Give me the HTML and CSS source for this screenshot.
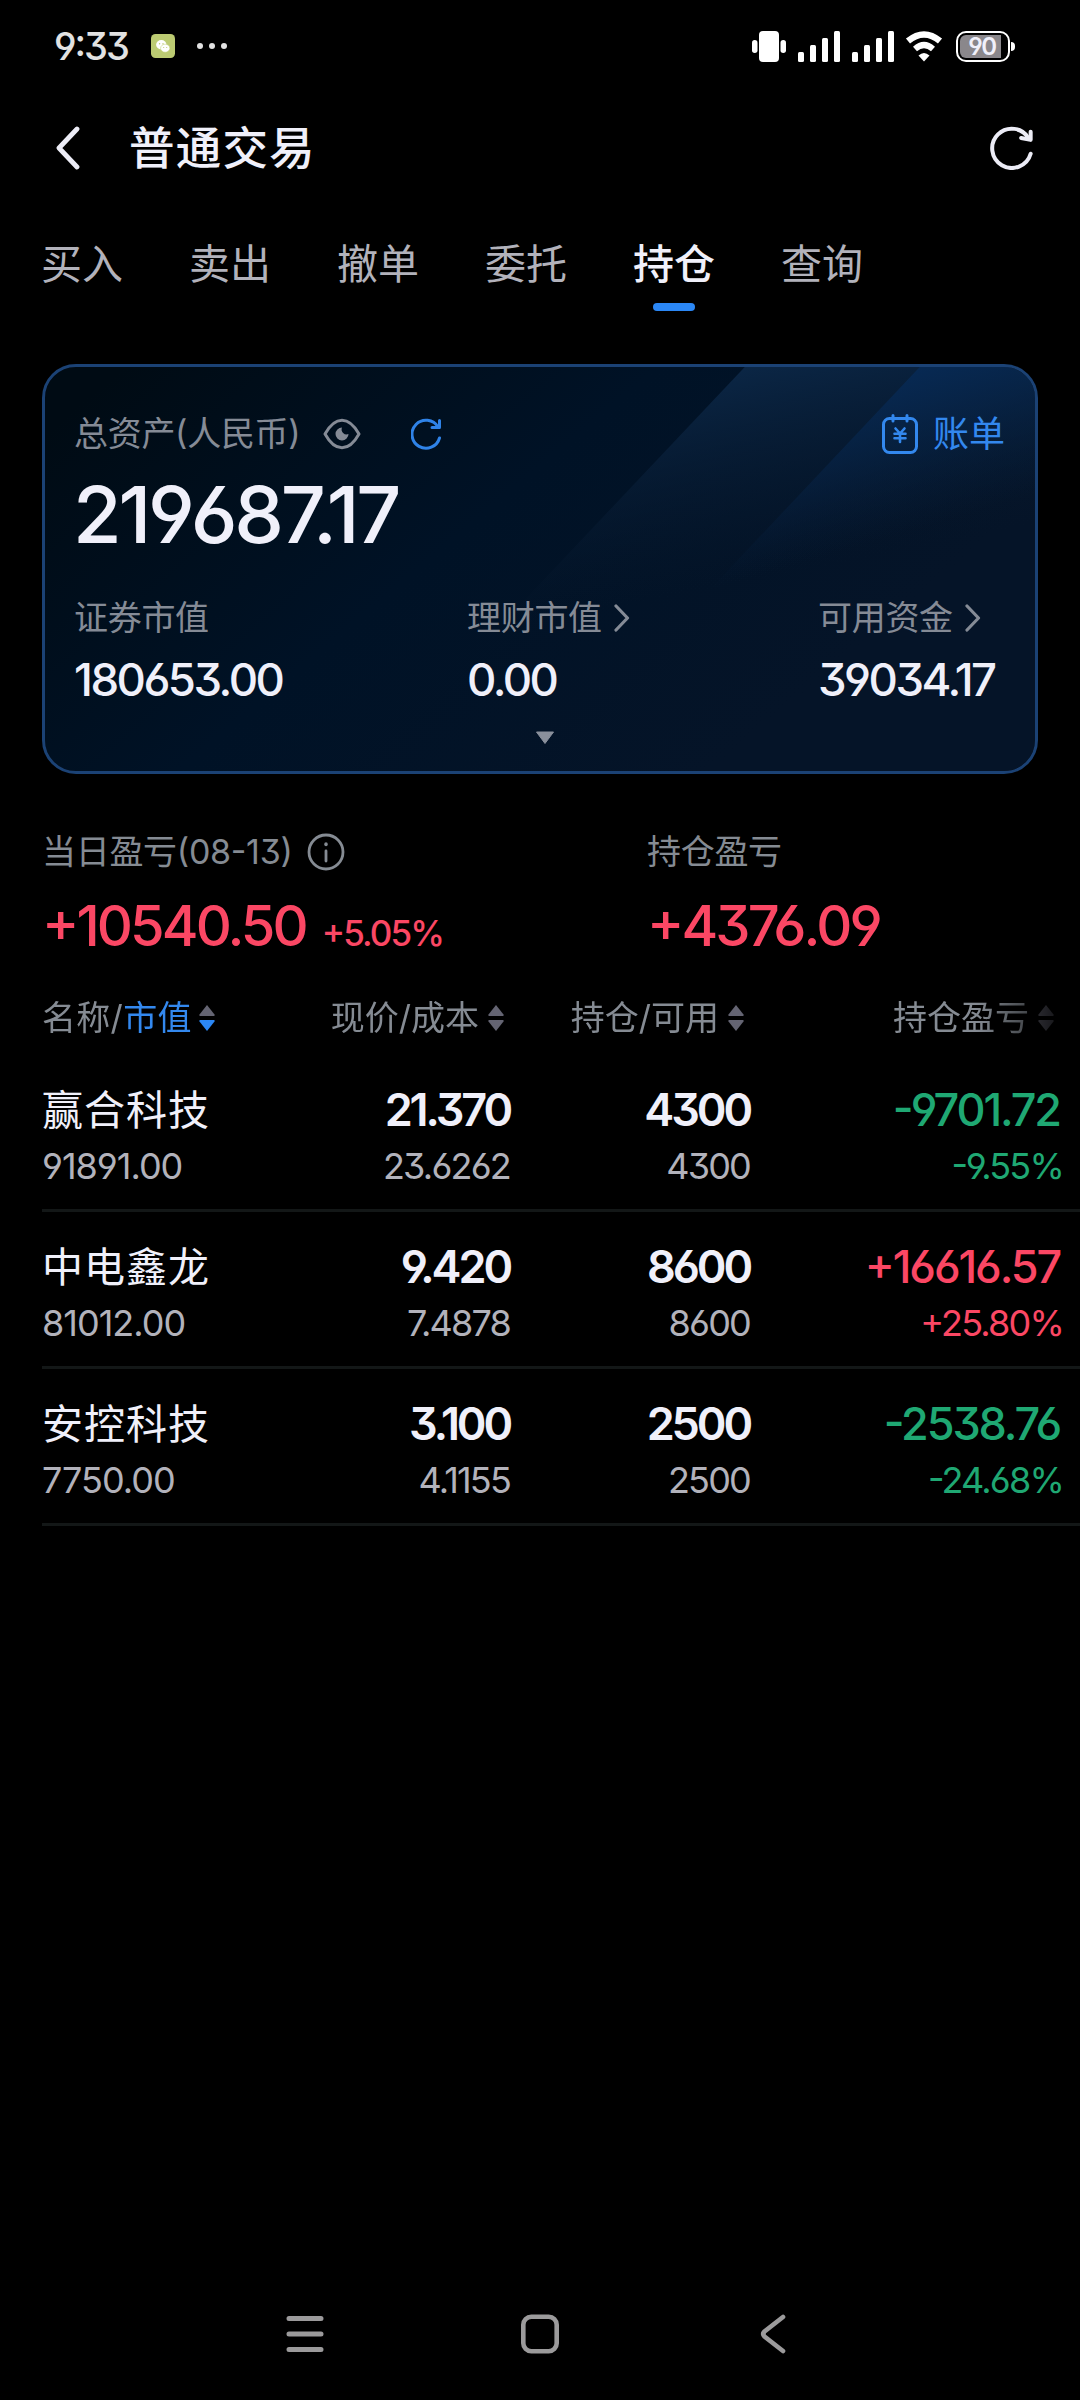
FILE: index.html
```html
<!DOCTYPE html>
<html lang="zh-CN">
<head>
  <meta charset="UTF-8">
  <meta name="viewport" content="width=device-width, initial-scale=1.0">
  <title>普通交易</title>
  <link rel="stylesheet" href="styles.css">
</head>
<body>
  <div class="status-bar">
    <span class="time">9:33</span>
    <svg class="chat-icon" width="24" height="24" viewBox="0 0 24 24">
      <rect width="24" height="24" rx="4.5" fill="#bccb72"/>
      <ellipse cx="10.3" cy="10.8" rx="5.2" ry="4.7" fill="#fff"/>
      <ellipse cx="14.2" cy="14.2" rx="4.6" ry="4" fill="#fff" stroke="#bccb72" stroke-width=".5"/>
      <g fill="#bccb72">
        <circle cx="8.6" cy="9.8" r=".7"/><circle cx="12" cy="9.8" r=".7"/>
        <circle cx="12.7" cy="13.5" r=".6"/><circle cx="15.7" cy="13.5" r=".6"/>
      </g>
    </svg>
    <svg class="more-icon" width="30" height="8" viewBox="0 0 30 8" fill="#e2e2e2">
      <circle cx="3" cy="4" r="3"/><circle cx="15" cy="4" r="3"/><circle cx="27" cy="4" r="3"/>
    </svg>
    <div class="status-right">
      <svg width="34" height="31" viewBox="0 0 34 31" fill="#fff">
        <rect x="7" y="0" width="20" height="31" rx="4"/>
        <rect x="0" y="9" width="5.5" height="13" rx="2.7"/>
        <rect x="28.5" y="9" width="5.5" height="13" rx="2.7"/>
      </svg>
      <svg class="signal" width="42" height="31" viewBox="0 0 42 31" fill="#fff">
        <rect x="0" y="21" width="6" height="10" rx="1.5"/><rect x="12" y="14" width="6" height="17" rx="1.5"/>
        <rect x="24" y="7" width="6" height="24" rx="1.5"/><rect x="36" y="0" width="6" height="31" rx="1.5"/>
      </svg>
      <svg class="signal" width="42" height="31" viewBox="0 0 42 31" fill="#fff">
        <rect x="0" y="21" width="6" height="10" rx="1.5"/><rect x="12" y="14" width="6" height="17" rx="1.5"/>
        <rect x="24" y="7" width="6" height="24" rx="1.5"/><rect x="36" y="0" width="6" height="31" rx="1.5"/>
      </svg>
      <svg class="wifi" width="38" height="31" viewBox="0 0 38 31">
        <path d="M3 10Q19-3 35 10" fill="none" stroke="#fff" stroke-width="6.5"/>
        <path d="M10 18Q19 10 28 18" fill="none" stroke="#fff" stroke-width="6"/>
        <path d="M19 30.5L13.5 24.5Q19 19.5 24.5 24.5Z" fill="#fff"/>
      </svg>
      <div class="battery"><span class="battery-level">90</span></div>
    </div>
  </div>

  <div class="header">
    <svg width="24" height="44" viewBox="0 0 24 44" fill="none" stroke="#ececf6" stroke-width="4.8" stroke-linecap="round" stroke-linejoin="round">
      <path d="M21 3L3 22L21 41"/>
    </svg>
    <h1>普通交易</h1>
    <svg class="refresh" width="44" height="44" viewBox="0 0 46 46" fill="none" stroke="#ececf6" stroke-width="4.2" stroke-linecap="round" stroke-linejoin="round">
      <path d="M42.5 29A20.5 20.5 0 1 1 40.5 13"/>
      <path d="M42.5 6V14.5L32.5 12.5"/>
    </svg>
  </div>

  <div class="tabs">
    <div class="tab">买入</div>
    <div class="tab">卖出</div>
    <div class="tab">撤单</div>
    <div class="tab">委托</div>
    <div class="tab active">持仓</div>
    <div class="tab">查询</div>
  </div>

  <div class="card">
    <svg class="card-bg" viewBox="0 0 996 410" preserveAspectRatio="none">
      <defs>
        <linearGradient id="base" gradientUnits="userSpaceOnUse" x1="150" y1="-60" x2="600" y2="470">
          <stop offset="0" stop-color="#000b14"/>
          <stop offset=".5" stop-color="#001226"/>
          <stop offset="1" stop-color="#051428"/>
        </linearGradient>
        <linearGradient id="beam" gradientUnits="userSpaceOnUse" x1="704" y1="0" x2="746" y2="210">
          <stop offset="0" stop-color="#0b2645"/>
          <stop offset="1" stop-color="#08182c" stop-opacity="0"/>
        </linearGradient>
        <linearGradient id="beam2" gradientUnits="userSpaceOnUse" x1="880" y1="0" x2="925" y2="150">
          <stop offset="0" stop-color="#072953"/>
          <stop offset="1" stop-color="#07203f" stop-opacity="0"/>
        </linearGradient>
      </defs>
      <rect width="996" height="410" fill="url(#base)"/>
      <path d="M704 0H996V410H320Z" fill="url(#beam)"/>
      <path d="M880 0H996V230H665Z" fill="url(#beam2)"/>
    </svg>
    <div class="card-top">
      <span class="label">总资产(人民币)</span>
      <svg class="eye" width="38" height="32" viewBox="0 0 38 32">
        <path d="M2 16C7 7 12.5 2.2 19 2.2S31 7 36 16C31 25 25.5 29.8 19 29.8S7 25 2 16Z" fill="none" stroke="#858b96" stroke-width="3" stroke-linejoin="round"/>
        <path d="M19 9.5A6.5 6.5 0 1 0 25.5 16A5 5 0 0 1 19 9.5Z" fill="#858b96"/>
      </svg>
      <svg class="reload" width="30" height="32" viewBox="0 0 30 32" fill="none" stroke="#2f83e8" stroke-width="3" stroke-linecap="round" stroke-linejoin="round">
        <path d="M28.5 20A14 14 0 1 1 27 9"/>
        <path d="M28.5 2.5V9.5H21"/>
      </svg>
      <a class="bill">
        <svg width="36" height="40" viewBox="0 0 36 40" fill="none" stroke="#3388ee" stroke-width="3" stroke-linecap="round" stroke-linejoin="round">
          <rect x="1.5" y="4.5" width="33" height="34" rx="6"/>
          <path d="M11 1.5V7M25 1.5V7"/>
          <path d="M13.5 14.5L18 19.5L22.5 14.5M18 19.5V28M12.5 19.8H23.5M12.5 24.3H23.5" stroke-width="2.6"/>
        </svg>
        账单
      </a>
    </div>
    <div class="total">219687.17</div>
    <div class="assets">
      <div class="asset">
        <div class="label">证券市值</div>
        <div class="amount">180653.00</div>
      </div>
      <div class="asset">
        <div class="label">理财市值<svg class="chevron" width="16" height="28" viewBox="0 0 16 28"><path d="M2 2L13.5 14L2 26"/></svg></div>
        <div class="amount">0.00</div>
      </div>
      <div class="asset">
        <div class="label">可用资金<svg class="chevron" width="16" height="28" viewBox="0 0 16 28"><path d="M2 2L13.5 14L2 26"/></svg></div>
        <div class="amount">39034.17</div>
      </div>
    </div>
    <svg class="expand" width="20" height="14" viewBox="0 0 20 14"><path d="M1.5 1H18.5L10 12.5Z" fill="#8a909c" stroke="#8a909c" stroke-linejoin="round"/></svg>
  </div>

  <div class="profit">
    <div class="profit-item">
      <div class="label">当日盈亏(08-13)
        <svg width="38" height="38" viewBox="0 0 38 38" fill="none" stroke="#858b93" stroke-width="2.8" stroke-linecap="round">
          <circle cx="19" cy="19" r="17"/>
          <path d="M19 18V28"/>
          <path d="M19 11V11.5" stroke-width="3.5"/>
        </svg>
      </div>
      <div class="profit-value up"><span>+10540.50</span><span class="percent">+5.05%</span></div>
    </div>
    <div class="profit-item">
      <div class="label">持仓盈亏</div>
      <div class="profit-value up"><span>+4376.09</span></div>
    </div>
  </div>

  <div class="holdings">
    <div class="row head">
      <div class="cell">名称/<span class="sorted">市值</span><svg class="sort desc" width="16" height="28" viewBox="0 0 16 28"><path d="M8 1L15.5 10.5V12H.5V10.5Z"/><path class="arrow-down" d="M8 27L.5 17.5V16H15.5V17.5Z"/></svg></div>
      <div class="cell">现价/成本<svg class="sort" width="16" height="28" viewBox="0 0 16 28"><path d="M8 1L15.5 10.5V12H.5V10.5Z"/><path class="arrow-down" d="M8 27L.5 17.5V16H15.5V17.5Z"/></svg></div>
      <div class="cell">持仓/可用<svg class="sort" width="16" height="28" viewBox="0 0 16 28"><path d="M8 1L15.5 10.5V12H.5V10.5Z"/><path class="arrow-down" d="M8 27L.5 17.5V16H15.5V17.5Z"/></svg></div>
      <div class="cell">持仓盈亏<svg class="sort" width="16" height="28" viewBox="0 0 16 28"><path d="M8 1L15.5 10.5V12H.5V10.5Z"/><path class="arrow-down" d="M8 27L.5 17.5V16H15.5V17.5Z"/></svg></div>
    </div>
    <div class="row">
      <div class="cell"><div class="name">赢合科技</div><div class="sub">91891.00</div></div>
      <div class="cell"><div class="num">21.370</div><div class="sub">23.6262</div></div>
      <div class="cell"><div class="num">4300</div><div class="sub">4300</div></div>
      <div class="cell down"><div class="num">-9701.72</div><div class="sub">-9.55%</div></div>
    </div>
    <div class="row">
      <div class="cell"><div class="name">中电鑫龙</div><div class="sub">81012.00</div></div>
      <div class="cell"><div class="num">9.420</div><div class="sub">7.4878</div></div>
      <div class="cell"><div class="num">8600</div><div class="sub">8600</div></div>
      <div class="cell up"><div class="num">+16616.57</div><div class="sub">+25.80%</div></div>
    </div>
    <div class="row">
      <div class="cell"><div class="name">安控科技</div><div class="sub">7750.00</div></div>
      <div class="cell"><div class="num">3.100</div><div class="sub">4.1155</div></div>
      <div class="cell"><div class="num">2500</div><div class="sub">2500</div></div>
      <div class="cell down"><div class="num">-2538.76</div><div class="sub">-24.68%</div></div>
    </div>
  </div>

  <div class="nav-bar">
    <svg width="40" height="40" viewBox="0 0 40 40" fill="none" stroke="#9b9a9b" stroke-width="5" stroke-linecap="round"><path d="M4 4.5H36M4 20H36M4 35.5H36"/></svg>
    <svg width="40" height="40" viewBox="0 0 40 40" fill="none" stroke="#9b9a9b" stroke-width="4.6"><rect x="3.3" y="2.8" width="33.4" height="34.4" rx="8"/></svg>
    <svg width="40" height="40" viewBox="0 0 40 40" fill="none" stroke="#9b9a9b" stroke-width="4.6" stroke-linecap="round"><path d="M28 3L9.5 17.5Q7 20 9.5 22.5L28 37"/></svg>
  </div>
</body>
</html>
```
FILE: styles.css
```css
* {
  box-sizing: border-box;
}
body {
  margin: 0;
  width: 1080px;
  height: 2400px;
  display: flex;
  flex-direction: column;
  overflow: hidden;
  background-color: #000;
  color: #f0f0fa;
  font-family: Inter, 'Noto Sans CJK SC', sans-serif;
  /* open 6 and 9, flat-top 3, raised hyphen */
  font-feature-settings: 'cv03', 'cv04', 'cv09', 'case';
}
svg {
  display: block;
  flex: none;
}

/* status bar */
.status-bar {
  height: 92px;
  padding: 0 70px 0 54px;
  display: flex;
  align-items: center;
}
.time {
  font-size: 38px;
  font-weight: 500;
  line-height: 92px;
  letter-spacing: -2px;
  color: #e2e2e2;
}
.chat-icon {
  margin-left: 23px;
}
.more-icon {
  margin-left: 22px;
}
.status-right {
  margin-left: auto;
  display: flex;
  align-items: center;
}
.signal {
  margin-left: 12px;
}
.wifi {
  margin-left: 11px;
}
.battery {
  position: relative;
  width: 54px;
  height: 31px;
  margin-left: 13px;
  padding: 2px;
  border: 2px solid #fff;
  border-radius: 10px;
}
.battery::after {
  content: '';
  position: absolute;
  right: -7px;
  top: 9px;
  width: 4px;
  height: 9px;
  border-radius: 0 5px 5px 0;
  background-color: #fff;
}
.battery-level {
  display: block;
  width: 41px;
  height: 23px;
  border-radius: 6px 0 0 6px;
  background-color: #8a878b;
  padding-left: 3px;
  font-size: 24px;
  font-weight: 600;
  line-height: 23px;
  text-align: center;
  letter-spacing: -1.5px;
}

/* header */
.header {
  height: 112px;
  padding: 0 46px 0 56px;
  display: flex;
  align-items: center;
}
h1 {
  margin: 1px 0 0 49px;
  font-size: 45.5px;
  font-weight: 500;
  letter-spacing: 1.2px;
  line-height: 60px;
}
.refresh {
  margin-left: auto;
}

/* tabs */
.tabs {
  height: 160px;
  padding: 30px 41px 0;
  display: flex;
  gap: 66px;
}
.tab {
  width: 82px;
  font-size: 41px;
  line-height: 60px;
  color: #b2b2bb;
}
.tab.active {
  color: #f0f0fa;
  font-weight: 500;
}
.tab.active::after {
  content: '';
  display: block;
  width: 42px;
  height: 8px;
  margin: 9px auto 0;
  border-radius: 4px;
  background-color: #2b87f5;
}

/* asset card */
.card {
  position: relative;
  flex: none;
  width: 996px;
  height: 410px;
  margin-left: 42px;
  padding: 40px 30px 0 29px;
  border: 3px solid #1b4275;
  border-radius: 34px;
  overflow: hidden;
}
.card-bg {
  position: absolute;
  inset: 0;
  width: 100%;
  height: 100%;
  z-index: -1;
}
.card-top {
  height: 54px;
  display: flex;
  align-items: center;
}
.label {
  display: flex;
  align-items: center;
  font-size: 34px;
  line-height: 50px;
  letter-spacing: -0.3px;
  color: #858b96;
}
.eye {
  margin-left: 23px;
}
.reload {
  margin-left: 50px;
}
.bill {
  display: flex;
  align-items: center;
  gap: 15px;
  margin-left: auto;
  font-size: 36px;
  line-height: 50px;
  color: #3388ee;
}
.total {
  font-size: 79px;
  font-weight: 500;
  line-height: 106px;
  letter-spacing: -3.2px;
  text-indent: -1px;
}
.assets {
  margin-top: 26px;
  display: grid;
  grid-template-columns: 393px 351px 1fr;
}
.amount {
  font-size: 45.5px;
  font-weight: 500;
  line-height: 74px;
  letter-spacing: -2.5px;
}
.chevron {
  margin-left: 12px;
  fill: none;
  stroke: #858b96;
  stroke-width: 3.2;
  stroke-linecap: round;
  stroke-linejoin: round;
}
.expand {
  margin: 14px 0 0 461px;
}

/* profit */
.profit {
  display: grid;
  grid-template-columns: 605px 1fr;
  padding: 53px 0 0 42px;
}
.profit-item .label {
  gap: 14px;
  color: #858b93;
}
.profit-value {
  display: flex;
  align-items: baseline;
  height: 98px;
  font-size: 56px;
  font-weight: 500;
  line-height: 98px;
  letter-spacing: -2.9px;
}
.percent {
  margin-left: 16px;
  font-size: 35px;
  letter-spacing: -1.9px;
}
.up {
  color: #fb4764;
}
.down {
  color: #1fa873;
}

/* holdings */
.row {
  display: grid;
  grid-template-columns: 230px 238px 240px 310px;
  height: 157px;
  margin-left: 42px;
  padding-top: 27px;
  border-bottom: 3px solid #131717;
}
.cell {
  text-align: right;
}
.cell:first-child {
  text-align: left;
}
.head {
  height: 80px;
  padding-top: 23px;
  border: 0;
  -webkit-mask-image: linear-gradient(to right, #000 90%, transparent);
  mask-image: linear-gradient(to right, #000 90%, transparent);
}
.head .cell {
  display: flex;
  align-items: center;
  justify-content: flex-end;
  height: 40px;
  padding-right: 6px;
  font-size: 34px;
  line-height: 40px;
  color: #858b93;
}
.head .cell:first-child {
  justify-content: flex-start;
  letter-spacing: 0.3px;
}
.sorted {
  color: #3388ee;
}
.sort {
  margin-left: 9px;
  fill: #646472;
}
.head .cell:first-child .sort {
  margin-left: 7px;
}
.sort.desc .arrow-down {
  fill: #2b87f5;
}
.name {
  font-size: 41px;
  line-height: 56px;
  letter-spacing: 1px;
}
.num {
  font-size: 45px;
  font-weight: 600;
  line-height: 56px;
  letter-spacing: -3.1px;
}
.sub {
  font-size: 36px;
  line-height: 56px;
  letter-spacing: -1.8px;
  color: #b2b2bb;
}
.cell:first-child .sub {
  letter-spacing: -1px;
}
.up .num,
.down .num {
  font-weight: 500;
  letter-spacing: -2.1px;
}
.up .sub,
.down .sub {
  margin-right: -3px;
  color: inherit;
}

/* system navigation */
.nav-bar {
  margin-top: auto;
  height: 132px;
  padding-left: 285px;
  display: flex;
  align-items: center;
  gap: 195px;
}
```
